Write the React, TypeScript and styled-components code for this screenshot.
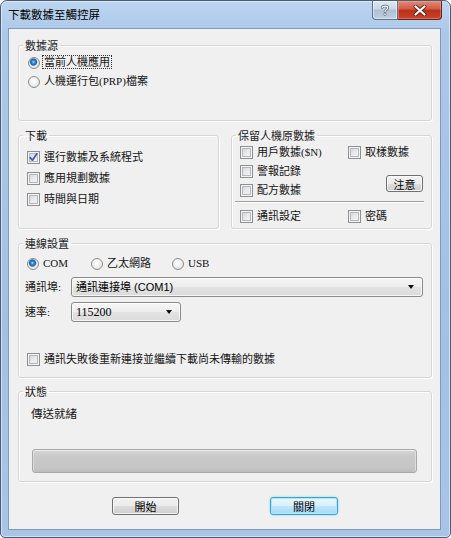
import React from "react";
import styled, { createGlobalStyle, css } from "styled-components";

const GlobalStyle = createGlobalStyle`
  html, body {
    margin: 0;
    padding: 0;
    background: #ffffff;
  }

  body {
    font-family: "Liberation Serif", "Noto Sans CJK TC", serif;
    font-size: 11px;
    color: #141414;
  }
`;

const cjkSans = `"Noto Sans CJK TC", sans-serif`;

const DialogFrame = styled.div`
  box-sizing: border-box;
  width: 451px;
  height: 538px;
  display: flex;
  flex-direction: column;
  padding: 0 9px 7px 7px;
  border: 1px solid #4b5d73;
  border-radius: 7px 7px 5px 5px;
  background-color: #a9c6e8;
  background-image: linear-gradient(180deg, #bdd5f0 0%, #acc8e9 6%, #a2c1e5 60%, #a8c5e8 100%);
  box-shadow: inset 0 0 0 1px rgba(255, 255, 255, 0.5);
`;

const TitleBar = styled.div`
  height: 27px;
  display: flex;
  align-items: flex-start;
  flex: none;
`;

const Title = styled.div`
  flex: 1;
  margin-top: 6px;
  font-family: ${cjkSans};
  font-size: 11.5px;
  line-height: 14px;
  color: #000;
`;

const CaptionButtons = styled.div`
  display: flex;
  margin-right: -1px;
`;

const HelpButton = styled.div`
  box-sizing: border-box;
  width: 26px;
  height: 19px;
  border: 1px solid #5e7390;
  border-top: none;
  border-radius: 0 0 0 4px;
  background-color: #bccbdd;
  background-image: linear-gradient(180deg, #dfe7f1 0%, #c9d6e5 45%, #aebfd4 50%, #bfd0e3 100%);
  box-shadow: inset 0 0 0 1px rgba(255, 255, 255, 0.45);
  display: flex;
  align-items: center;
  justify-content: center;
`;

const CloseButton = styled.div`
  box-sizing: border-box;
  width: 44px;
  height: 19px;
  border: 1px solid #6a2014;
  border-top: none;
  border-left: none;
  border-radius: 0 0 4px 0;
  background-color: #c43d27;
  background-image: linear-gradient(180deg, #e08a78 0%, #d15a44 45%, #bb2f18 50%, #c9432a 100%);
  box-shadow: inset 0 0 0 1px rgba(255, 180, 160, 0.4);
  display: flex;
  align-items: center;
  justify-content: center;
`;

const Client = styled.div`
  flex: 1;
  display: flex;
  flex-direction: column;
  background: #f0f0f0;
  border: 1px solid #8199b6;
  padding: 10px 8px 0 9px;
`;

const Group = styled.fieldset<{ $h: number; $pt?: number }>`
  box-sizing: border-box;
  margin: 0;
  min-width: 0;
  height: ${(p) => p.$h}px;
  padding: ${(p) => p.$pt ?? 0}px 8px 0 8px;
  border: 1px solid #d6d6d6;
  border-radius: 3px;
  box-shadow: inset 1px 1px 0 #ffffff, 1px 1px 0 #ffffff;
  display: flex;
  flex-direction: column;
`;

const Legend = styled.legend`
  margin-left: -4px;
  padding: 0 2px;
  font-family: ${cjkSans};
  font-size: 11px;
  line-height: 12px;
  color: #1a1a1a;
`;

const Split = styled.div`
  display: flex;
  gap: 12px;
  margin-top: 8px;
  & > * {
    flex: 1;
  }
`;

const Option = styled.div<{ $h: number; $w?: number; $ml?: number }>`
  display: flex;
  align-items: center;
  gap: 4px;
  height: ${(p) => p.$h}px;
  width: ${(p) => (p.$w ? `${p.$w}px` : "auto")};
  margin-left: ${(p) => p.$ml ?? 0}px;
  flex: none;
  line-height: 13px;
  white-space: nowrap;
`;

const Radio = styled.span<{ $on?: boolean }>`
  box-sizing: border-box;
  width: 12px;
  height: 12px;
  flex: none;
  border-radius: 50%;
  border: 1px solid #8b8c8c;
  background: radial-gradient(circle at 45% 40%, #ffffff 0, #f2f2f2 40%, #d9d9d9 100%);
  ${(p) =>
    p.$on &&
    css`
      background: radial-gradient(circle at 45% 40%, #a9dcff 0, #3a8fd6 1.5px, #1b5fa8 3px, #5da4de 3.6px, #eeeeee 4.2px, #d9d9d9 100%);
    `}
`;

const Check = styled.span`
  box-sizing: border-box;
  width: 13px;
  height: 13px;
  flex: none;
  border: 1px solid #8e8f8f;
  background: linear-gradient(135deg, #cdd1d6 0%, #e8e9eb 50%, #f8f8f8 100%);
  box-shadow: inset 0 0 0 1px #f4f4f4, inset 0 0 0 2px #b4b8be;
  display: flex;
  align-items: center;
  justify-content: center;
`;

const Focus = styled.span`
  border: 1px dotted #333;
  padding: 0 1px;
  margin-left: -2px;
`;

const Column = styled.div<{ $mt?: number }>`
  display: flex;
  flex-direction: column;
  margin-top: ${(p) => p.$mt ?? 0}px;
`;

const KeepGrid = styled.div`
  display: grid;
  grid-template-columns: 108px 1fr;
  grid-template-rows: 19px 19px 18px;
  margin-top: 2px;
`;

const Separator = styled.div`
  height: 1px;
  margin: 2px -1px 0 -5px;
  background: #a0a0a0;
  border-bottom: 1px solid #ffffff;
`;

const Button = styled.button<{ $w: number; $default?: boolean }>`
  box-sizing: border-box;
  width: ${(p) => p.$w}px;
  height: 18px;
  padding: 0;
  border: 1px solid #707070;
  border-radius: 3px;
  background: linear-gradient(180deg, #f2f2f2 0%, #ebebeb 50%, #dddddd 51%, #cfcfcf 100%);
  box-shadow: inset 0 0 0 1px rgba(255, 255, 255, 0.75);
  font-family: ${cjkSans};
  font-size: 11px;
  line-height: 14px;
  color: #000;
  ${(p) =>
    p.$default &&
    css`
      border-color: #3c9fd1;
      background: linear-gradient(180deg, #eaf6fd 0%, #d9f0fc 50%, #bee6fd 51%, #a7d9f5 100%);
      box-shadow: inset 0 0 0 1px #a9ecff, 0 0 2px #6bd1ff;
    `}
`;

const NoteButton = styled(Button)`
  grid-column: 2;
  grid-row: 2 / 4;
  justify-self: end;
  align-self: end;
  margin-bottom: 7px;
  height: 17px;
`;

const RadioRow = styled.div<{ $mt?: number }>`
  display: flex;
  margin-top: ${(p) => p.$mt ?? 0}px;
`;

const FieldRow = styled.div<{ $mt: number }>`
  display: flex;
  align-items: center;
  margin-top: ${(p) => p.$mt}px;
`;

const FieldLabel = styled.span`
  width: 46px;
  margin-left: -2px;
  flex: none;
  line-height: 13px;
`;

const Combo = styled.div<{ $w?: number; $serif?: boolean }>`
  box-sizing: border-box;
  height: 20px;
  flex: ${(p) => (p.$w ? "none" : "1")};
  width: ${(p) => (p.$w ? `${p.$w}px` : "auto")};
  border: 1px solid #8a8a8a;
  border-radius: 3px;
  background: linear-gradient(180deg, #f6f6f6 0%, #ededed 50%, #e3e3e3 51%, #dbdbdb 100%);
  box-shadow: inset 0 0 0 1px rgba(255, 255, 255, 0.7);
  display: flex;
  align-items: center;
  padding: 0 8px 0 4px;
  font-family: ${(p) => (p.$serif ? `"Liberation Serif", "Noto Sans CJK TC", serif` : `"Liberation Sans", "Noto Sans CJK TC", sans-serif`)};
  font-size: ${(p) => (p.$serif ? 12 : 11)}px;
  line-height: 13px;
  color: #000;
`;

const Arrow = styled.span`
  margin-left: auto;
  width: 0;
  height: 0;
  border-top: 4px solid #111;
  border-left: 3.5px solid transparent;
  border-right: 3.5px solid transparent;
`;

const StatusText = styled.div`
  margin: 8px 0 0 4px;
  line-height: 16px;
  font-family: ${cjkSans};
  font-size: 11.5px;
`;

const Progress = styled.div`
  box-sizing: border-box;
  height: 24px;
  margin: 28px 6px 0 5px;
  border: 1px solid #a9a9a9;
  border-radius: 3px;
  background: linear-gradient(180deg, #d6d6d6 0%, #c9c9c9 30%, #c6c6c6 80%, #bdbdbd 100%);
  box-shadow: inset 0 1px 0 #ececec, inset 1px 0 0 #dcdcdc, inset -1px 0 0 #dcdcdc;
`;

const Footer = styled.div`
  display: flex;
  justify-content: center;
  gap: 91px;
  margin-top: 15px;
`;

const CheckMark = () => (
  <svg width="11" height="11" viewBox="0 0 11 11">
    <path d="M2.2 5.6 L4.4 8.2 L8.8 1.8" fill="none" stroke="#3f56b8" strokeWidth="1.7" strokeLinecap="round" strokeLinejoin="round" />
  </svg>
);

const HelpGlyph = () => (
  <svg width="10" height="12" viewBox="0 0 10 12">
    <path d="M2.2 3.6 C2.2 1.6 7.8 1.4 7.8 3.8 C7.8 5.6 5 5.6 5 7.6" fill="none" stroke="#5d6f86" strokeWidth="2.6" strokeLinecap="round" />
    <path d="M2.2 3.6 C2.2 1.6 7.8 1.4 7.8 3.8 C7.8 5.6 5 5.6 5 7.6" fill="none" stroke="#ffffff" strokeWidth="1.2" strokeLinecap="round" />
    <circle cx="5" cy="10.2" r="1.3" fill="#ffffff" stroke="#5d6f86" strokeWidth="0.8" />
  </svg>
);

const CloseGlyph = () => (
  <svg width="14" height="11" viewBox="0 0 14 11">
    <path d="M2.5 1.5 L11.5 9.5 M11.5 1.5 L2.5 9.5" stroke="#5a1c12" strokeWidth="3.8" strokeLinecap="round" />
    <path d="M2.5 1.5 L11.5 9.5 M11.5 1.5 L2.5 9.5" stroke="#ffffff" strokeWidth="2.2" strokeLinecap="round" />
  </svg>
);

type BoxProps = { label: React.ReactNode; on?: boolean; h: number; w?: number; ml?: number };

const CheckOption = ({ label, on, h, w, ml }: BoxProps) => (
  <Option $h={h} $w={w} $ml={ml}>
    <Check>{on && <CheckMark />}</Check>
    <span>{label}</span>
  </Option>
);

const RadioOption = ({ label, on, h, w, ml }: BoxProps) => (
  <Option $h={h} $w={w} $ml={ml}>
    <Radio $on={on} />
    <span>{label}</span>
  </Option>
);

export default function App() {
  return (
    <>
      <GlobalStyle />
      <DialogFrame>
        <TitleBar>
          <Title>下載數據至觸控屏</Title>
          <CaptionButtons>
            <HelpButton>
              <HelpGlyph />
            </HelpButton>
            <CloseButton>
              <CloseGlyph />
            </CloseButton>
          </CaptionButtons>
        </TitleBar>

        <Client>
          <Group $h={82} $pt={2}>
            <Legend>數據源</Legend>
            <RadioOption h={19} ml={1} on label={<Focus>當前人機應用</Focus>} />
            <RadioOption h={19} ml={1} label="人機運行包(PRP)檔案" />
          </Group>

          <Split>
            <Group $h={100} $pt={6}>
              <Legend>下載</Legend>
              <CheckOption h={21} on label="運行數據及系統程式" />
              <CheckOption h={21} label="應用規劃數據" />
              <CheckOption h={21} label="時間與日期" />
            </Group>

            <Group $h={100}>
              <Legend>保留人機原數據</Legend>
              <KeepGrid>
                <CheckOption h={19} label="用戶數據($N)" />
                <CheckOption h={19} label="取樣數據" />
                <CheckOption h={19} label="警報記錄" />
                <NoteButton $w={37}>注意</NoteButton>
                <CheckOption h={18} label="配方數據" />
              </KeepGrid>
              <Separator />
              <RadioRow $mt={4}>
                <CheckOption h={18} w={108} label="通訊設定" />
                <CheckOption h={18} label="密碼" />
              </RadioRow>
            </Group>
          </Split>

          <Column $mt={8}>
            <Group $h={141} $pt={5}>
              <Legend>連線設置</Legend>
              <RadioRow>
                <RadioOption h={19} w={64} on label="COM" />
                <RadioOption h={19} w={81} label="乙太網路" />
                <RadioOption h={19} label="USB" />
              </RadioRow>
              <FieldRow $mt={4}>
                <FieldLabel>通訊埠:</FieldLabel>
                <Combo>
                  通訊連接埠 (COM1)
                  <Arrow />
                </Combo>
              </FieldRow>
              <FieldRow $mt={5}>
                <FieldLabel>速率:</FieldLabel>
                <Combo $w={110} $serif>
                  115200
                  <Arrow />
                </Combo>
              </FieldRow>
              <Column $mt={28}>
                <CheckOption h={18} label="通訊失敗後重新連接並繼續下載尚未傳輸的數據" />
              </Column>
            </Group>
          </Column>

          <Column $mt={7}>
            <Group $h={97}>
              <Legend>狀態</Legend>
              <StatusText>傳送就緒</StatusText>
              <Progress />
            </Group>
          </Column>

          <Footer>
            <Button $w={67}>開始</Button>
            <Button $w={68} $default>
              關閉
            </Button>
          </Footer>
        </Client>
      </DialogFrame>
    </>
  );
}
